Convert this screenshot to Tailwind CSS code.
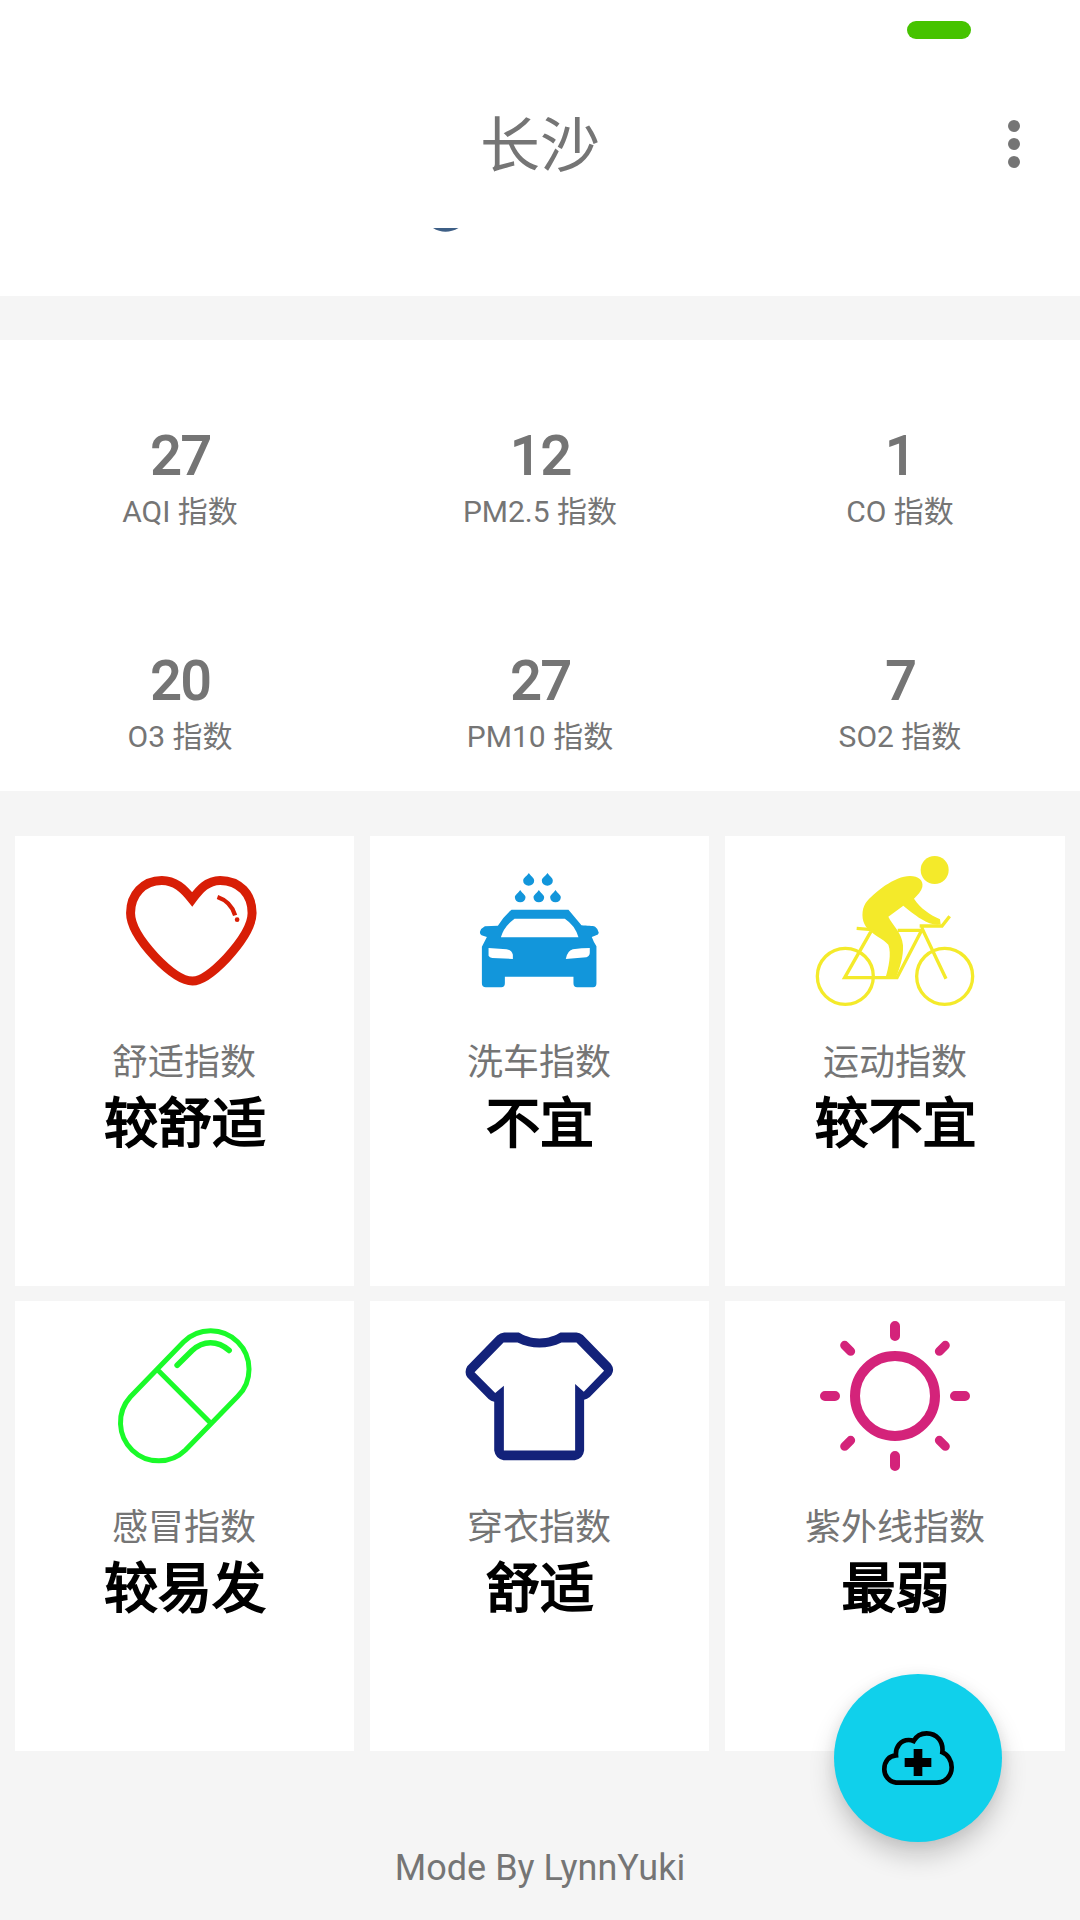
<!DOCTYPE html>
<html lang="zh-CN">
<head>
<meta charset="utf-8">
<title>长沙</title>
<script src="https://cdn.jsdelivr.net/npm/@tailwindcss/browser@4"></script>
</head>
<body class="w-[1080px] h-[1920px] overflow-hidden bg-[#f5f5f5] font-['Roboto','Noto_Sans_CJK_SC',sans-serif] text-[#757575]">
<div class="relative flex flex-col h-[1920px]">
  <!-- Status bar and title -->
  <header class="bg-white h-[228px] shrink-0">
    <div class="h-[60px] flex justify-end pt-[21px] pr-[109px]">
      <div class="w-16 h-[18px] rounded-[9px] bg-[#46c300]"></div>
    </div>
    <div class="grid grid-cols-3 items-center h-[168px]">
      <span></span>
      <h1 class="text-center text-[60px] leading-[88px] pt-[6px]">长沙</h1>
      <svg class="justify-self-end mr-[60px] w-3 h-12" viewBox="0 0 12 48" fill="#757575"><circle cx="6" cy="6" r="6"/><circle cx="6" cy="24" r="6"/><circle cx="6" cy="42" r="6"/></svg>
    </div>
  </header>
  <!-- Bottom edge of the scrolled forecast chart -->
  <section class="bg-white h-[68px] shrink-0">
    <svg class="ml-[433px] w-[26px] h-[5px]" viewBox="0 0 26 5" fill="#3e5f86"><path d="M0 0H25.500Q19 3.800 12.500 3.800T0 0Z"/></svg>
  </section>
  <!-- Air quality -->
  <section class="bg-white mt-[44px] h-[451px] shrink-0 grid grid-cols-3 auto-rows-[225px] text-center">
    <div class="pt-[83px]"><div class="pl-[2px] text-[54px] leading-[66px] [-webkit-text-stroke:2px_#757575]">27</div><div class="text-[30px] leading-[46px]">AQI 指数</div></div>
    <div class="pt-[83px]"><div class="pl-[2px] text-[54px] leading-[66px] [-webkit-text-stroke:2px_#757575]">12</div><div class="text-[30px] leading-[46px]">PM2.5 指数</div></div>
    <div class="pt-[83px]"><div class="pl-[2px] text-[54px] leading-[66px] [-webkit-text-stroke:2px_#757575]">1</div><div class="text-[30px] leading-[46px]">CO 指数</div></div>
    <div class="pt-[83px]"><div class="pl-[2px] text-[54px] leading-[66px] [-webkit-text-stroke:2px_#757575]">20</div><div class="text-[30px] leading-[46px]">O3 指数</div></div>
    <div class="pt-[83px]"><div class="pl-[2px] text-[54px] leading-[66px] [-webkit-text-stroke:2px_#757575]">27</div><div class="text-[30px] leading-[46px]">PM10 指数</div></div>
    <div class="pt-[83px]"><div class="pl-[2px] text-[54px] leading-[66px] [-webkit-text-stroke:2px_#757575]">7</div><div class="text-[30px] leading-[46px]">SO2 指数</div></div>
  </section>
  <!-- Lifestyle indices -->
  <section class="mt-[45px] px-[15px] grid grid-cols-[339px_339px_340px] gap-x-4 gap-y-[15px] auto-rows-[450px] text-center">
    <article class="bg-white">
      <svg class="block w-full h-[200px]" viewBox="45 48 1018 600" fill="none" stroke="#d81e06">
        <path stroke-width="27" d="M577 238C551 205 525 181 486 181C430 181 392 224 392 279C392 322 424 366 466 411C507 454 548 483 578 483C607 483 642 455 680 415C724 367 757 319 757 279C757 223 719 181 661 181C623 181 600 207 577 238Z"/>
        <path stroke-width="13" d="M653 231Q694 245 706 286"/>
        <circle cx="712" cy="299" r="7" fill="#d81e06" stroke="none"/>
      </svg>
      <div class="pr-px text-[36px] leading-[54px]">舒适指数</div><div class="pl-px text-[54px] leading-[70px] text-black [-webkit-text-stroke:2px_#000]">较舒适</div>
    </article>
    <article class="bg-white">
      <svg class="block w-full h-[200px]" viewBox="30 48 1018 600" fill="#1296db">
        <path d="M507 159C512 168 523 173 523 182A16.500 15 0 0 1 490 182C490 173 502 168 507 159Z"/>
        <path d="M563 159C568 168 579 173 579 182A16.500 15 0 0 1 546 182C546 173 558 168 563 159Z"/>
        <path d="M481 210C486 219 497 224 497 232A16 15 0 0 1 465 232C465 224 476 219 481 210Z"/>
        <path d="M537 210C542 219 553 224 553 232A16 15 0 0 1 521 232C521 224 532 219 537 210Z"/>
        <path d="M587 210C592 219 603 224 603 232A16 15 0 0 1 571 232C571 224 582 219 587 210Z"/>
        <path fill-rule="evenodd" d="M455 269H626L665 316C682 318 698 317 706 320Q715 326 717 338Q716 345 709 346L696 351Q701 365 710 379V490Q710 502 700 502H652Q641 502 641 490V470H435V490Q435 502 424 502H378Q366 502 366 490V380L381 351L365 346Q360 344 360 336Q364 324 375 319Q395 317 414 317Q431 290 455 269ZM464 296Q432 320 423 352H656Q646 316 615 296ZM386 384V407Q389 413 397 414L459 417V404Q455 390 440 388ZM690 384Q666 384 639 388Q622 393 618 417L680 412Q690 408 690 398Z"/>
      </svg>
      <div class="pr-px text-[36px] leading-[54px]">洗车指数</div><div class="pl-px text-[54px] leading-[70px] text-black [-webkit-text-stroke:2px_#000]">不宜</div>
    </article>
    <article class="bg-white">
      <svg class="block w-full h-[200px]" viewBox="45 48 1020 600" fill="#f4ea2a">
        <circle cx="674" cy="150" r="42"/>
        <path d="M600 168C625 168 641 181 637 201C634 214 624 224 612 236C631 266 661 284 690 298L692 313C675 317 654 310 635 298C613 284 593 268 580 257L535 290C546 315 576 336 579 376C581 409 569 446 557 475H526C536 442 545 401 535 374C521 357 484 342 468 320C454 301 454 269 467 249C491 218 554 168 600 168Z"/>
        <g fill="none" stroke="#f4ea2a" stroke-width="10">
          <circle cx="406" cy="469" r="84"/><circle cx="704" cy="469" r="84"/>
          <path d="M440 325L486 329L404 473H561L637 327L708 476M563 331H635M629 318H696L719 289"/>
        </g>
      </svg>
      <div class="text-[36px] leading-[54px]">运动指数</div><div class="pl-px text-[54px] leading-[70px] text-black [-webkit-text-stroke:2px_#000]">较不宜</div>
    </article>
    <article class="bg-white">
      <svg class="block w-full h-[200px]" viewBox="45 93 1018 600" fill="none" stroke="#1afa29" stroke-width="15" stroke-linecap="round">
        <path d="M551 216A115 115 0 0 1 714 379L557 540A115 115 0 0 1 391 381ZM473 299L633 460"/>
        <path stroke-width="17" d="M532 286L576 242Q602 218 632 218Q662 218 688 241"/>
      </svg>
      <div class="pr-px text-[36px] leading-[54px]">感冒指数</div><div class="pl-px text-[54px] leading-[70px] text-black [-webkit-text-stroke:2px_#000]">较易发</div>
    </article>
    <article class="bg-white">
      <svg class="block w-full h-[200px]" viewBox="30 93 1018 600" fill="#13227a">
        <path fill-rule="evenodd" d="M433 187H477C491 196 514 205 539 205S588 196 602 187H650Q660 188 669 195L753 281Q766 298 755 315L690 381Q682 388 673 389V542Q670 567 645 571H431Q407 567 403 542V395Q393 394 386 387L322 322Q312 306 322 289L412 196Q421 188 433 187ZM431 217L344 307L406 369L432 347V542H646V342L672 365L733 302L650 217H605C585 227 562 232 539 232S494 227 473 217Z"/>
      </svg>
      <div class="pr-px text-[36px] leading-[54px]">穿衣指数</div><div class="pl-px text-[54px] leading-[70px] text-black [-webkit-text-stroke:2px_#000]">舒适</div>
    </article>
    <article class="bg-white">
      <svg class="block w-full h-[200px]" viewBox="45 93 1020 600" fill="none" stroke="#d4237a" stroke-width="30" stroke-linecap="round">
        <circle cx="555" cy="378" r="120"/>
        <path d="M555 168V198M555 558V588M345 378H375M735 378H765"/>
        <path stroke-width="27" d="M404 226L422 244M706 226L688 244M404 529L422 511M706 529L688 511"/>
      </svg>
      <div class="text-[36px] leading-[54px]">紫外线指数</div><div class="pl-px text-[54px] leading-[70px] text-black [-webkit-text-stroke:2px_#000]">最弱</div>
    </article>
  </section>
  <footer class="mt-[94px] text-center text-[36px] leading-[46px]">Mode By LynnYuki</footer>
  <!-- Floating action button -->
  <button class="absolute left-[834px] top-[1674px] w-[168px] h-[168px] rounded-full bg-[#10d0eb] shadow-[0_14px_26px_rgba(0,0,0,0.19),0_2px_14px_rgba(0,0,0,0.06)]">
    <svg class="block w-[168px] h-[168px]" viewBox="102 102 504 504">
      <path fill="none" stroke="#000" stroke-width="14" d="M288 428A40 40 0 0 1 253 387C253 364 267 347 288 346C286 321 302 300 326 300Q334 300 341 303C349 288 363 280 380 280C410 280 431 304 427 337C443 343 455 361 455 382C455 407 437 428 410 428Z"/>
      <path d="M341 327H367V354H394V381H367V408H341V381H314V354H341Z"/>
    </svg>
  </button>
</div>
</body>
</html>
